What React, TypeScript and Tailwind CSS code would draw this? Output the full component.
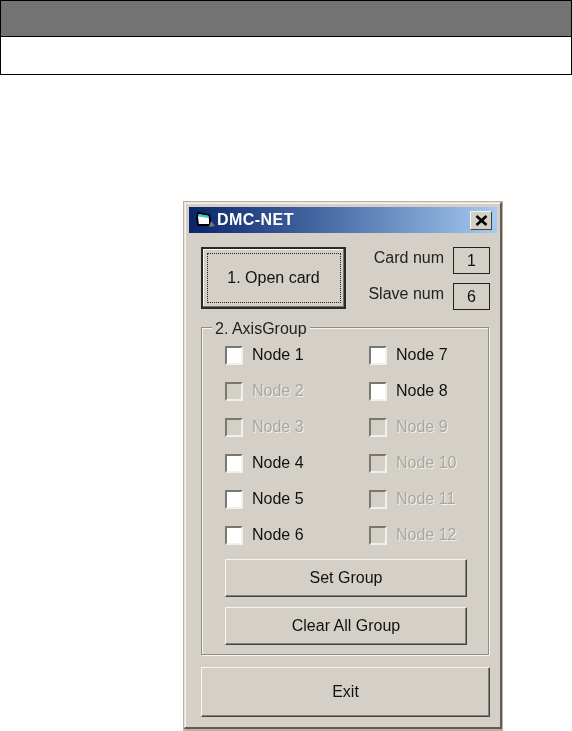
const leftNodes = [
  { label: "Node 1", enabled: true },
  { label: "Node 2", enabled: false },
  { label: "Node 3", enabled: false },
  { label: "Node 4", enabled: true },
  { label: "Node 5", enabled: true },
  { label: "Node 6", enabled: true },
];

const rightNodes = [
  { label: "Node 7", enabled: true },
  { label: "Node 8", enabled: true },
  { label: "Node 9", enabled: false },
  { label: "Node 10", enabled: false },
  { label: "Node 11", enabled: false },
  { label: "Node 12", enabled: false },
];

function NodeCheck({ label, enabled }: { label: string; enabled: boolean }) {
  return (
    <div className="flex h-[36px] items-center">
      <div
        className={`h-[19px] w-[18px] border-2 border-t-[#7b7871] border-l-[#7b7871] border-r-[#f2f0ec] border-b-[#f2f0ec] ${
          enabled ? "bg-white" : "bg-[#d4d0c8]"
        }`}
      />
      <span
        className={`ml-[9px] text-[16px] leading-none ${
          enabled ? "text-[#111]" : "text-[#a9a69f] [text-shadow:1px_1px_0_#f2f0ec]"
        }`}
      >
        {label}
      </span>
    </div>
  );
}

function WinButton({ label, className }: { label: string; className: string }) {
  return (
    <div
      className={`flex items-center justify-center border border-t-[#f6f5f2] border-l-[#f6f5f2] border-r-[#45433f] border-b-[#45433f] text-[16px] text-[#111] shadow-[inset_-1px_-1px_0_#86837c] ${className}`}
    >
      {label}
    </div>
  );
}

export default function App() {
  return (
    <div className="h-[731px] w-[572px] overflow-hidden bg-white font-['Liberation_Sans',Arial,sans-serif]">
      {/* empty table at the top of the page */}
      <div className="w-[572px] border border-black">
        <div className="h-[36px] border-b border-black bg-[#737373]" />
        <div className="h-[37px] bg-white" />
      </div>

      {/* dialog, tan edge comes from the scanned page */}
      <div className="ml-[183px] mt-[126px] h-[530px] w-[320px] bg-[#c9ad9b] pb-[2px] pl-[1px] pr-[1px] pt-[1px]">
        <div className="h-full border-b-2 border-l border-r-2 border-t border-b-[#5f5d59] border-l-[#e6e3dc] border-r-[#5f5d59] border-t-[#e6e3dc] bg-[#d4d0c8] pb-[4px] pl-[4px] pr-[3px] pt-[4px] shadow-[inset_1px_1px_0_#f4f2ee] blur-[0.4px]">
          {/* title bar */}
          <div className="flex h-[26px] items-center bg-gradient-to-r from-[#0a246a] to-[#a6caf0] pl-[6px] pr-[5px]">
            <svg width="20" height="16" viewBox="0 0 20 16">
              <path d="M2 5 L3 1 L14 3 L15 7 L15 13 L3 13 Z" fill="#ffffff" stroke="#000000" strokeWidth="2" />
              <path d="M3.5 2 L13.5 3.8 L14 6 L3 4.5 Z" fill="#3cc8c4" />
              <path d="M16 9 L20 14 L14 15 Z" fill="#7a7a7a" />
            </svg>
            <span className="ml-[2px] text-[16px] font-bold tracking-[0.45px] text-white">DMC-NET</span>
            <div className="ml-auto flex h-[19px] w-[22px] items-center justify-center border border-t-[#f6f5f2] border-l-[#f6f5f2] border-r-[#45433f] border-b-[#45433f] bg-[#d4d0c8]">
              <svg width="13" height="11" viewBox="0 0 13 11">
                <path d="M1.5 1 L11.5 10 M11.5 1 L1.5 10" stroke="#000000" strokeWidth="2.6" />
              </svg>
            </div>
          </div>

          <div className="pl-[12px] pr-[7px]">
            {/* open card and counters */}
            <div className="mt-[14px] flex items-start justify-between">
              <div className="flex h-[62px] w-[145px] items-center justify-center border-2 border-[#2b2a28] text-[16px] text-[#111] shadow-[inset_-1px_-1px_0_#77746d,inset_1px_1px_0_#f6f5f2]">
                <div className="flex h-[50px] w-[134px] items-center justify-center border border-dotted border-[#222]">
                  1. Open card
                </div>
              </div>
              <div className="flex flex-col gap-[9px]">
                <div className="flex h-[27px] items-center justify-end">
                  <span className="pb-[6px] text-[16px] leading-[18px] text-[#222]">Card num</span>
                  <div className="ml-[9px] flex h-[27px] w-[37px] items-center justify-center border border-[#222] text-[16px] text-[#111]">1</div>
                </div>
                <div className="flex h-[27px] items-center justify-end">
                  <span className="pb-[6px] text-[16px] leading-[18px] text-[#222]">Slave num</span>
                  <div className="ml-[9px] flex h-[27px] w-[37px] items-center justify-center border border-[#222] text-[16px] text-[#111]">6</div>
                </div>
              </div>
            </div>

            {/* axis group */}
            <div className="relative mt-[17px] h-[328px] w-[288px] border border-[#8f8c85] pl-[23px] pt-[9px] shadow-[1px_1px_0_#f6f5f2,inset_1px_1px_0_#f6f5f2]">
              <span className="absolute -top-[8px] left-[10px] bg-[#d4d0c8] px-[3px] text-[16px] leading-[18px] text-[#222]">2. AxisGroup</span>
              <div className="flex">
                <div className="w-[144px]">
                  {leftNodes.map((n) => (
                    <NodeCheck key={n.label} label={n.label} enabled={n.enabled} />
                  ))}
                </div>
                <div>
                  {rightNodes.map((n) => (
                    <NodeCheck key={n.label} label={n.label} enabled={n.enabled} />
                  ))}
                </div>
              </div>
              <WinButton label="Set Group" className="mt-[6px] h-[38px] w-[242px]" />
              <WinButton label="Clear All Group" className="mt-[10px] h-[38px] w-[242px]" />
            </div>

            <WinButton label="Exit" className="mt-[12px] h-[50px] w-[289px]" />
          </div>
        </div>
      </div>
    </div>
  );
}
